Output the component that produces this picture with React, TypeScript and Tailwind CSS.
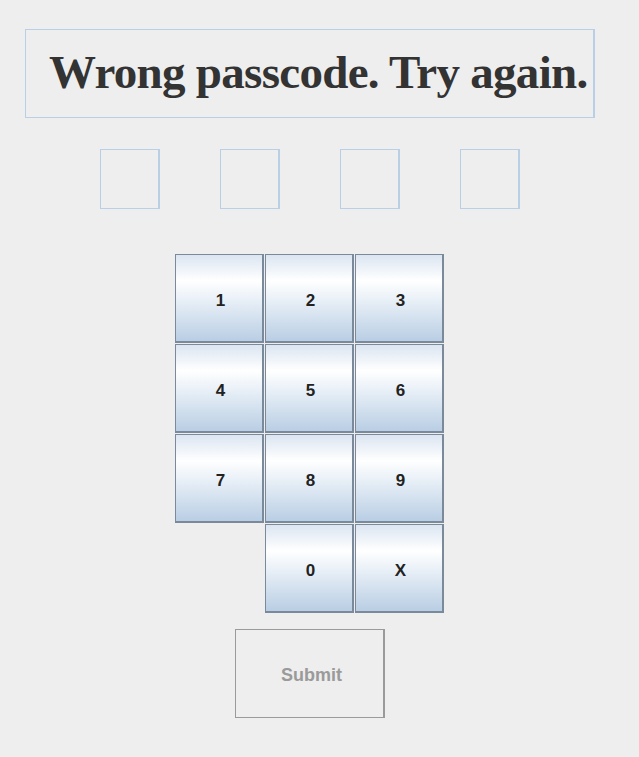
import React from "react";

const keys = ["1", "2", "3", "4", "5", "6", "7", "8", "9", "", "0", "X"];

function Key({ label }: { label: string }) {
	if (!label) return <div className="w-[89px] h-[89px]" />;
	return (
		<button className="w-[89px] h-[89px] border-t border-l border-r-2 border-b-2 border-[#7a8a9a] bg-[linear-gradient(to_bottom,#dbe5f1_0%,#ffffff_30%,#e6eef6_55%,#b9cee4_100%)] flex items-center justify-center pl-[3px] pt-[5px] text-[17px] font-bold text-[#222] font-['Liberation_Sans',Arial,sans-serif]">
			{label}
		</button>
	);
}

export default function App() {
	return (
		<div className="w-[639px] h-[757px] bg-[#eeeeee] flex flex-col overflow-hidden">
			<div className="ml-[25px] mt-[29px] w-[570px] h-[89px] border border-r-2 border-[#b8cfe5] flex items-center pl-[23px] pb-[3px]">
				<span className="font-['Liberation_Serif','Times_New_Roman',serif] font-bold text-[47px] tracking-[-0.7px] leading-none text-[#333] whitespace-nowrap">
					Wrong passcode. Try again.
				</span>
			</div>

			<div className="flex gap-[60px] ml-[100px] mt-[31px]">
				{[0, 1, 2, 3].map((i) => (
					<div key={i} className="w-[60px] h-[60px] border border-r-2 border-[#b8cfe5]" />
				))}
			</div>

			<div className="grid grid-cols-[89px_89px_89px] gap-px ml-[175px] mt-[45px] w-fit">
				{keys.map((k, i) => (
					<Key key={i} label={k} />
				))}
			</div>

			<button className="ml-[235px] mt-[16px] w-[150px] h-[89px] border border-r-2 border-[#9a9a9a] flex items-center justify-center pl-[4px] pt-[4px] text-[18px] font-bold text-[#9a9a9a] font-['Liberation_Sans',Arial,sans-serif]">
				Submit
			</button>
		</div>
	);
}
